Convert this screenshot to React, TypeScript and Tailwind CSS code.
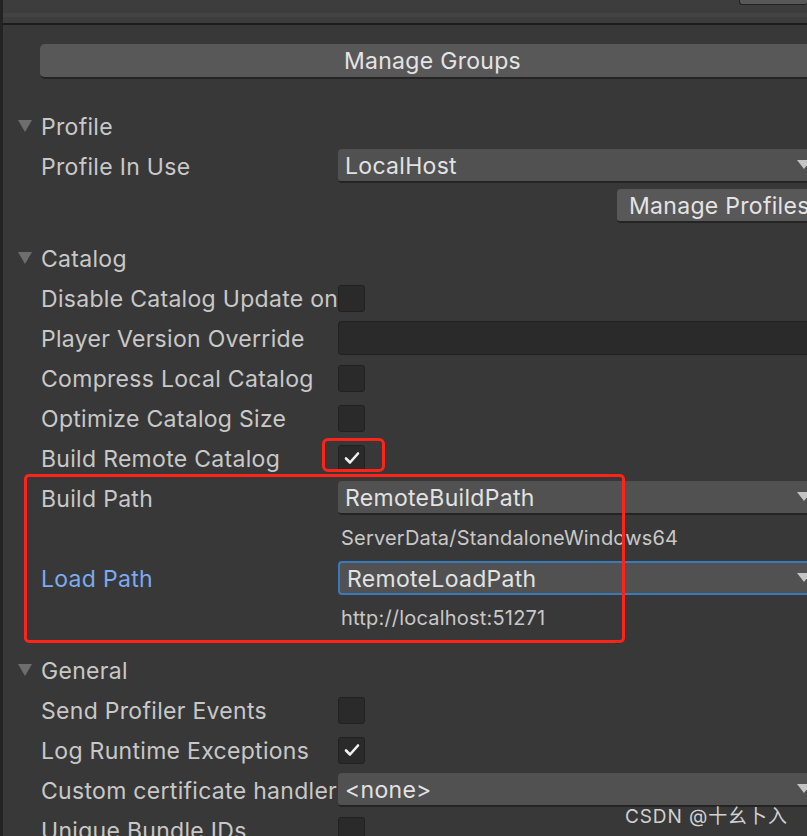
import React from 'react';

const font = { fontFamily: 'Inter, "Noto Sans CJK SC", sans-serif' };

function Caret() {
  return (
    <svg width="14" height="12" viewBox="0 0 14 12" className="shrink-0">
      <path d="M0 0 H14 L7 12 Z" fill="#6e6e6e" />
    </svg>
  );
}

function DropCaret() {
  return (
    <svg width="14" height="10" viewBox="0 0 14 10" className="absolute right-[-4px] top-1/2 -translate-y-1/2">
      <path d="M0 0 H14 L7 9 Z" fill="#c4c4c4" />
    </svg>
  );
}

function Check() {
  return (
    <svg width="16" height="14" viewBox="0 0 16 14">
      <path d="M2 7.5 L6 11.5 L14 2.5" stroke="#f0f0f0" strokeWidth="2.6" fill="none" strokeLinecap="round" strokeLinejoin="round" />
    </svg>
  );
}

function Header({ title }: { title: string }) {
  return (
    <div className="flex items-center h-10 shrink-0 pl-[15px] gap-[9px] text-[23px] tracking-[0.3px] text-[#c8c8c8]">
      <Caret />
      <span className="pt-[3px]">{title}</span>
    </div>
  );
}

function Label({ text, blue }: { text: string; blue?: boolean }) {
  return (
    <div
      className={`w-[335px] shrink-0 pl-[38px] pt-[3px] text-[23px] tracking-[0.3px] whitespace-nowrap overflow-hidden ${
        blue ? 'text-[#7babf0]' : 'text-[#c8c8c8]'
      }`}
    >
      {text}
    </div>
  );
}

function Checkbox({ checked }: { checked?: boolean }) {
  return (
    <div className="w-[27px] h-[27px] rounded-[3px] bg-[#2a2a2a] border border-[#212121] flex items-center justify-center">
      {checked && <Check />}
    </div>
  );
}

function Dropdown({ value, focused }: { value: string; focused?: boolean }) {
  return (
    <div
      className={`relative flex-1 h-[34px] rounded-l-[4px] bg-[#515151] flex items-center pl-[7px] text-[23px] tracking-[0.3px] text-[#e2e2e2] border-b-2 ${
        focused ? 'border-2 border-r-0 border-[#3a79bb]' : 'border-[#242424]'
      }`}
    >
      <span className="pt-[2px]">{value}</span>
      <DropCaret />
    </div>
  );
}

function Row({ children }: { children: React.ReactNode }) {
  return <div className="flex items-center h-10 shrink-0">{children}</div>;
}

function Note({ text }: { text: string }) {
  return (
    <Row>
      <div className="w-[335px] shrink-0" />
      <div className="pl-[3px] text-[20px] tracking-[0.2px] text-[#c8c8c8]">{text}</div>
    </Row>
  );
}

export default function App() {
  return (
    <div className="w-[807px] h-[836px] overflow-hidden bg-[#383838] flex" style={font}>
      <div className="w-[3px] shrink-0 bg-[#232323]" />
      <div className="flex-1 flex flex-col relative">
        {/* top strip */}
        <div className="h-[25px] shrink-0 bg-[#3d3d3d] flex justify-end items-start border-b-2 border-[#1c1c1c] relative">
          <div className="absolute top-[13px] left-0 right-0 h-[4px] bg-[#434343]" />
          <div className="w-[68px] h-[5px] bg-[#585858] rounded-b-[3px] border-b border-l border-[#222] relative z-10" />
        </div>

        <div className="pl-[37px] pt-[19px] shrink-0">
          <div className="h-[35px] rounded-l-[5px] bg-[#585858] border-b-2 border-[#242424] flex items-center justify-center text-[23px] tracking-[0.3px] text-[#e4e4e4] -mr-[18px]">
            <span className="pt-[2px]">Manage Groups</span>
          </div>
        </div>

        <div className="h-[27px] shrink-0" />
        <Header title="Profile" />
        <Row>
          <Label text="Profile In Use" />
          <Dropdown value="LocalHost" />
        </Row>
        <div className="flex justify-end h-[42px] pt-[3px] shrink-0">
          <div className="w-[190px] h-[34px] rounded-l-[4px] bg-[#585858] border-b-2 border-[#242424] text-[23px] tracking-[0.3px] text-[#e4e4e4] pl-[12px] flex items-center whitespace-nowrap overflow-hidden">
            <span className="pt-[2px]">Manage Profiles</span>
          </div>
        </div>

        <div className="h-[10px] shrink-0" />
        <Header title="Catalog" />
        <Row>
          <Label text="Disable Catalog Update on Startup" />
          <Checkbox />
        </Row>
        <Row>
          <Label text="Player Version Override" />
          <div className="flex-1 h-[34px] rounded-l-[4px] bg-[#2a2a2a] border border-r-0 border-[#212121]" />
        </Row>
        <Row>
          <Label text="Compress Local Catalog" />
          <Checkbox />
        </Row>
        <Row>
          <Label text="Optimize Catalog Size" />
          <Checkbox />
        </Row>
        <Row>
          <Label text="Build Remote Catalog" />
          <Checkbox checked />
        </Row>
        <Row>
          <Label text="Build Path" />
          <Dropdown value="RemoteBuildPath" />
        </Row>
        <Note text="ServerData/StandaloneWindows64" />
        <Row>
          <Label text="Load Path" blue />
          <Dropdown value="RemoteLoadPath" focused />
        </Row>
        <Note text="http://localhost:51271" />

        <div className="h-[12px] shrink-0" />
        <Header title="General" />
        <Row>
          <Label text="Send Profiler Events" />
          <Checkbox />
        </Row>
        <Row>
          <Label text="Log Runtime Exceptions" />
          <Checkbox checked />
        </Row>
        <Row>
          <Label text="Custom certificate handler" />
          <Dropdown value="<none>" />
        </Row>
        <Row>
          <Label text="Unique Bundle IDs" />
          <Checkbox />
        </Row>

        {/* annotations */}
        <div className="absolute left-[319px] top-[438px] w-[63px] h-[34px] border-[3px] border-[#ff2418] rounded-[6px]" />
        <div className="absolute left-[21px] top-[474px] w-[601px] h-[169px] border-[3px] border-[#ff2418] rounded-[5px]" />
        <div className="absolute left-[622px] top-[803px] text-[19px] tracking-[0.9px] text-[#d0d0d0]">CSDN @十幺卜入</div>
      </div>
    </div>
  );
}
